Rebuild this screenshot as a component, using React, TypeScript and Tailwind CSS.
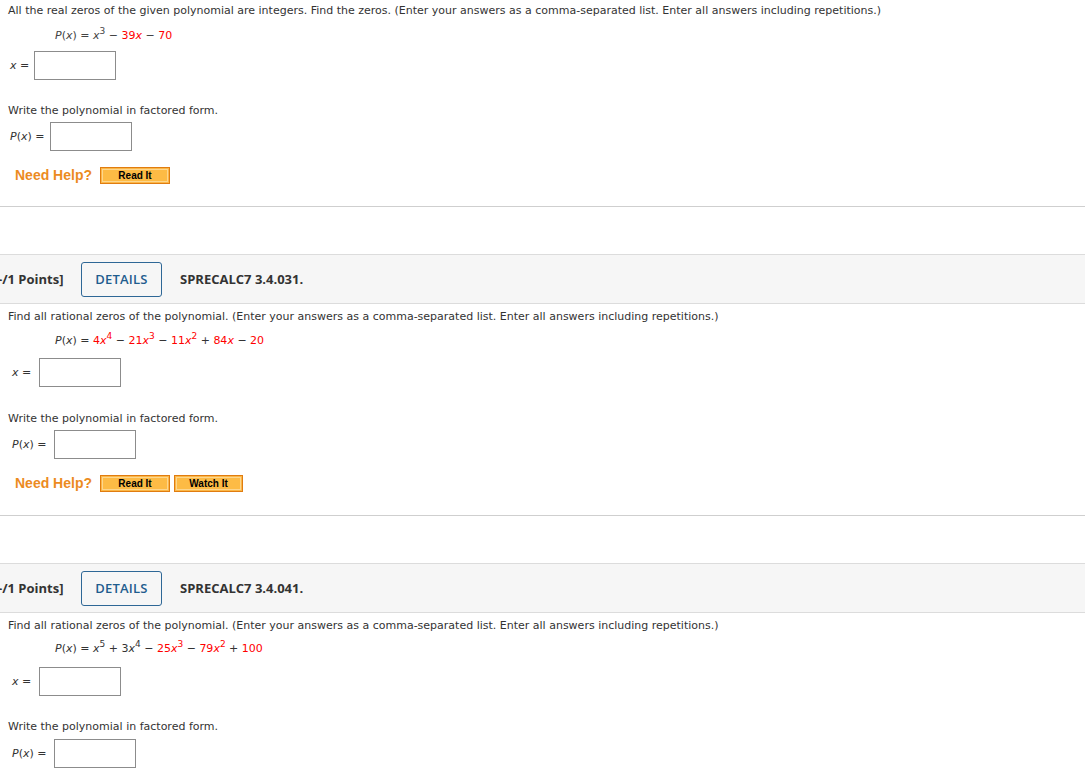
import React from 'react';

const body = { fontFamily: '"DejaVu Sans", Verdana, sans-serif' };
const header = { fontFamily: '"Open Sans", sans-serif' };

function Red({ children }: { children: React.ReactNode }) {
    return <span className="text-[#ff0000]">{children}</span>;
}

function V({ children }: { children: React.ReactNode }) {
    return <i className="italic">{children}</i>;
}

function Sup({ children, red }: { children: React.ReactNode; red?: boolean }) {
    return <sup className={`text-[9px] relative -top-[5px] ${red ? 'text-[#ff0000]' : ''}`}>{children}</sup>;
}

function Box({ w = 82 }: { w?: number }) {
    return <div className="h-[29px] border border-[#8c8c8c] bg-white" style={{ width: w }} />;
}

function OrangeButton({ label, w }: { label: string; w: number }) {
    return (
        <div
            className="h-[17px] border border-[#e07c10] bg-[#fbb747] p-[1px] flex"
            style={{ width: w }}
        >
            <div className="flex-1 border border-[#fdd68e] bg-[#fdbb45] flex items-center justify-center text-[10px] font-bold text-black leading-none" style={{ fontFamily: '"Liberation Sans", Arial, sans-serif' }}>
                {label}
            </div>
        </div>
    );
}

function NeedHelp({ watch }: { watch?: boolean }) {
    return (
        <div className="flex items-center pl-[15px] h-[17px]">
            <span className="text-[14px] font-bold text-[#ec8b1f] mr-[8px]" style={{ fontFamily: '"Liberation Sans", Arial, sans-serif' }}>
                Need Help?
            </span>
            <OrangeButton label="Read It" w={70} />
            {watch && <div className="ml-[4px]"><OrangeButton label="Watch It" w={69} /></div>}
        </div>
    );
}

function QHeader({ code }: { code: string }) {
    return (
        <div className="h-[50px] border-y border-[#dcdcdc] bg-[#f6f6f6] flex items-center" style={header}>
            <span className="text-[13px] font-bold text-[#333] -ml-[2px] w-[83px]">-/1 Points]</span>
            <div className="w-[81px] h-[35px] rounded-[3px] border border-[#2e6796] flex items-center justify-center text-[13px] font-semibold text-[#1f5d8e] tracking-[0.2px]">
                DETAILS
            </div>
            <span className="ml-[18px] text-[13px] font-bold text-[#333]">{code}</span>
        </div>
    );
}

function Divider() {
    return <div className="h-px bg-[#cfcfcf]" />;
}

export default function App() {
    return (
        <div className="w-[1085px] h-[782px] overflow-hidden bg-white text-[11px] text-[#333] leading-[13px]" style={body}>
            {/* first question, partly scrolled */}
            <div className="pt-[4px] pl-[8px]">All the real zeros of the given polynomial are integers. Find the zeros. (Enter your answers as a comma-separated list. Enter all answers including repetitions.)</div>
            <div className="pl-[55px] mt-[12px] text-[#444]">
                <V>P</V>(<V>x</V>) = <V>x</V><Sup>3</Sup> − <Red>39<V>x</V></Red> − <Red>70</Red>
            </div>
            <div className="flex items-center pl-[10px] mt-[9px]">
                <span className="w-[24px]"><V>x</V> =</span>
                <Box />
            </div>
            <div className="pl-[8px] mt-[24px]">Write the polynomial in factored form.</div>
            <div className="flex items-center pl-[10px] mt-[5px]">
                <span className="w-[40px]"><V>P</V>(<V>x</V>) =</span>
                <Box />
            </div>
            <div className="mt-[16px]"><NeedHelp /></div>
            <div className="mt-[22px]"><Divider /></div>

            {/* second question */}
            <div className="mt-[47px]"><QHeader code="SPRECALC7 3.4.031." /></div>
            <div className="pt-[6px] pl-[8px]">Find all rational zeros of the polynomial. (Enter your answers as a comma-separated list. Enter all answers including repetitions.)</div>
            <div className="pl-[55px] mt-[11px]">
                <V>P</V>(<V>x</V>) = <Red>4<V>x</V></Red><Sup red>4</Sup> − <Red>21<V>x</V></Red><Sup red>3</Sup> − <Red>11<V>x</V></Red><Sup red>2</Sup> + <Red>84<V>x</V></Red> − <Red>20</Red>
            </div>
            <div className="flex items-center pl-[12px] mt-[11px]">
                <span className="w-[27px]"><V>x</V> =</span>
                <Box />
            </div>
            <div className="pl-[8px] mt-[25px]">Write the polynomial in factored form.</div>
            <div className="flex items-center pl-[12px] mt-[5px]">
                <span className="w-[42px]"><V>P</V>(<V>x</V>) =</span>
                <Box />
            </div>
            <div className="mt-[16px]"><NeedHelp watch /></div>
            <div className="mt-[23px]"><Divider /></div>

            {/* third question */}
            <div className="mt-[47px]"><QHeader code="SPRECALC7 3.4.041." /></div>
            <div className="pt-[6px] pl-[8px]">Find all rational zeros of the polynomial. (Enter your answers as a comma-separated list. Enter all answers including repetitions.)</div>
            <div className="pl-[55px] mt-[10px]">
                <V>P</V>(<V>x</V>) = <V>x</V><Sup>5</Sup> + 3<V>x</V><Sup>4</Sup> − <Red>25<V>x</V></Red><Sup red>3</Sup> − <Red>79<V>x</V></Red><Sup red>2</Sup> + <Red>100</Red>
            </div>
            <div className="flex items-center pl-[12px] mt-[12px]">
                <span className="w-[27px]"><V>x</V> =</span>
                <Box />
            </div>
            <div className="pl-[8px] mt-[24px]">Write the polynomial in factored form.</div>
            <div className="flex items-center pl-[12px] mt-[6px]">
                <span className="w-[42px]"><V>P</V>(<V>x</V>) =</span>
                <Box />
            </div>
        </div>
    );
}
